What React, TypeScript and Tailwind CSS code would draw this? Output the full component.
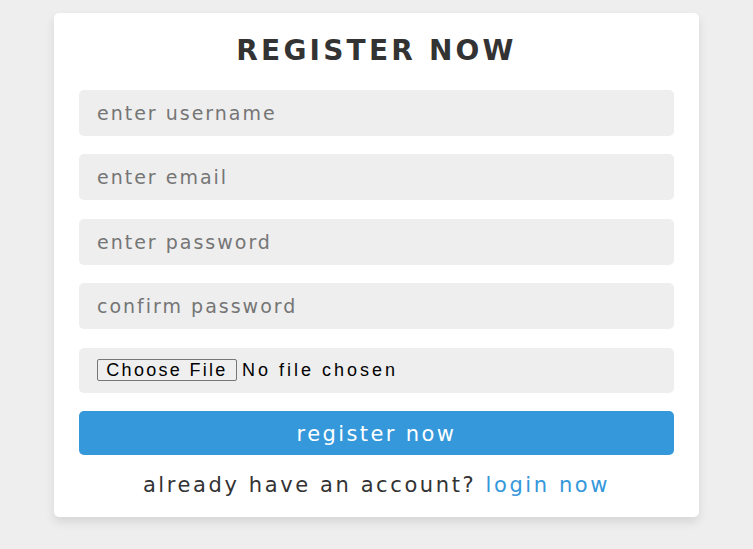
import React from "react";

const fields = [
  { type: "text", placeholder: "enter username" },
  { type: "email", placeholder: "enter email" },
  { type: "password", placeholder: "enter password" },
  { type: "password", placeholder: "confirm password" },
];

const App = () => {
  return (
    <div
      className="w-full min-h-screen bg-[#eeeeee] pt-[13px]"
      style={{ fontFamily: '"DejaVu Sans", sans-serif' }}
    >
      {/* Register card */}
      <form className="mx-auto w-[645px] bg-white rounded-[5px] shadow-[0_5px_10px_rgba(0,0,0,0.1)] px-[25px] pt-[18px] pb-[17px] text-center">
        <h3 className="text-[28px] leading-[40px] font-bold uppercase text-[#333333] tracking-[3.2px]">
          register now
        </h3>

        <div className="mt-[18.5px] flex flex-col gap-[18.5px]">
          {fields.map((f, idx) => (
            <input
              key={idx}
              type={f.type}
              placeholder={f.placeholder}
              className="w-full h-[46px] rounded-[5px] bg-[#eeeeee] px-[18px] text-[19px] tracking-[2px] text-[#333333] placeholder:text-[#757575] outline-none"
            />
          ))}

          {/* File picker */}
          <div
            className="w-full h-[45px] rounded-[5px] bg-[#eeeeee] px-[18px] flex items-center text-left text-[18px] text-black"
            style={{ fontFamily: '"Liberation Sans", Arial, sans-serif' }}
          >
            <span className="h-[22px] w-[140px] flex items-center justify-center border border-[#767676] bg-[#efefef] rounded-[2px] tracking-[2.3px] leading-none">
              Choose File
            </span>
            <span className="ml-[5px] tracking-[3px] leading-none">No file chosen</span>
          </div>

          <button
            type="button"
            className="w-full h-[44px] rounded-[5px] bg-[#3498db] text-white text-[21px] tracking-[2.4px] pt-[3px]"
          >
            register now
          </button>
        </div>

        <p className="mt-[14.5px] text-[21px] leading-[30px] text-[#333333] tracking-[2.6px]">
          already have an account? <a className="text-[#3498db]">login now</a>
        </p>
      </form>
    </div>
  );
};

export default App;
